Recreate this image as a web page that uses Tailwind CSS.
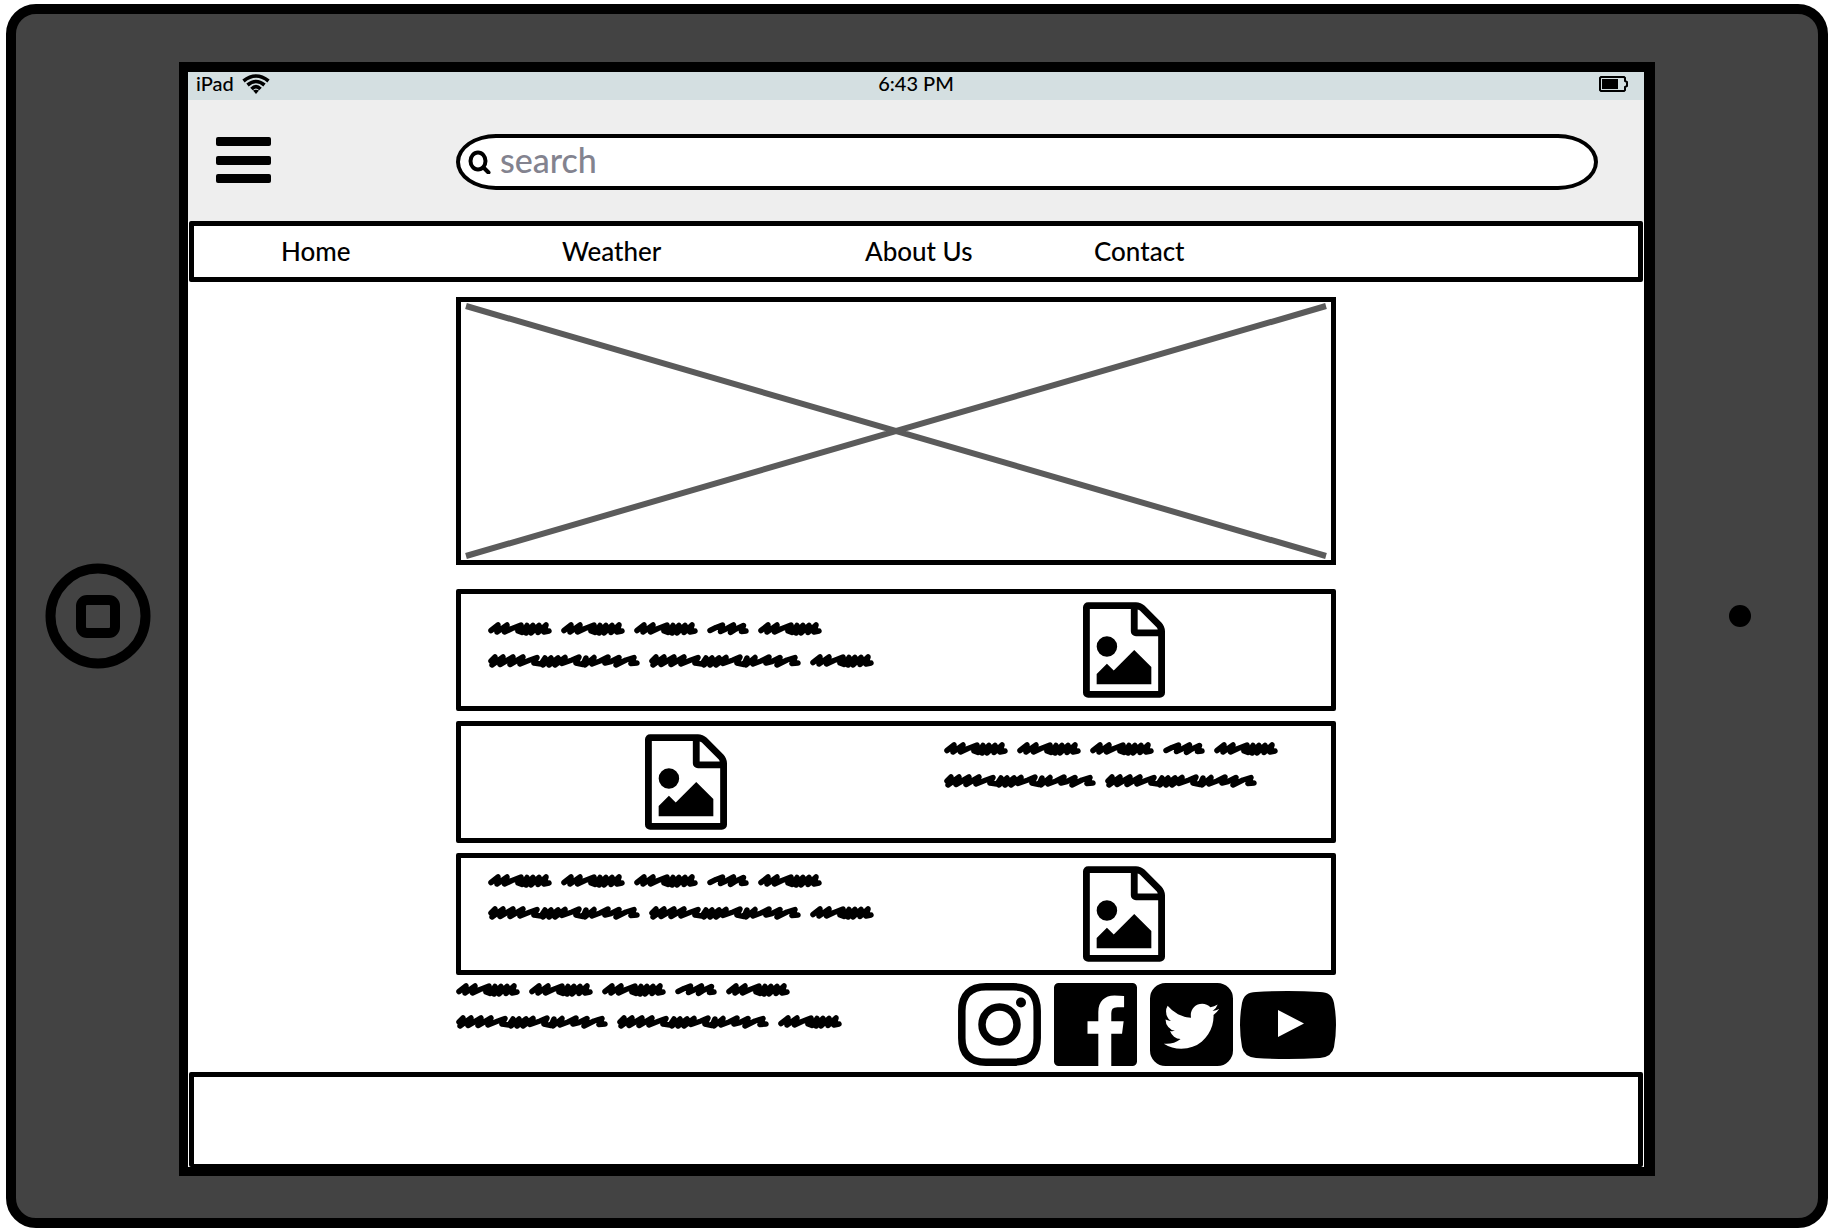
<!DOCTYPE html>
<html lang="en">
<head>
<meta charset="utf-8">
<meta name="viewport" content="width=device-width, initial-scale=1">
<title>Tablet wireframe</title>
<script src="https://cdn.jsdelivr.net/npm/@tailwindcss/browser@4"></script>
</head>
<body class="flex min-h-screen bg-white pt-1 pr-1 pb-1 pl-[6px] font-['Lato',sans-serif] font-medium text-black">

<!-- Shared shapes -->
<svg class="hidden" aria-hidden="true">
  <symbol id="file-image" viewBox="0 0 1536 1792"><path d="M1468 380q28 28 48 76t20 88v1152q0 40-28 68t-68 28h-1344q-40 0-68-28t-28-68v-1600q0-40 28-68t68-28h896q40 0 88 20t76 48zm-444-244v376h376q-10-29-22-41l-313-313q-12-12-41-22zm384 1528v-1024h-416q-40 0-68-28t-28-68v-416h-768v1536h1280zm-128-448v320h-1024v-192l192-192 128 128 384-384zm-832-192q-80 0-136-56t-56-136 56-136 136-56 136 56 56 136-56 136-136 56z"/></symbol>
  <symbol id="word-m" viewBox="0 0 64 14"><path fill="none" stroke="#000" stroke-width="5.500" stroke-linecap="round" stroke-linejoin="round" d="M3 8.500L10 3L9 10L19 3L16.500 10L24 6.500L33 3L30 9L34 10.500L39 3.500L38 11L45 3.500L43 11L51 3.500L50 10.500L58 3L56 10L61 9"/></symbol>
  <symbol id="word-s" viewBox="0 0 42 14"><path fill="none" stroke="#000" stroke-width="5.500" stroke-linecap="round" stroke-linejoin="round" d="M3 8.500L9 5.500L15.500 3L13.500 9.500L19 7L26.500 3L23.500 10.500L29 7L36.500 3.500L34.500 9.500L39 9"/></symbol>
  <symbol id="word-l" viewBox="0 0 152 14"><path fill="none" stroke="#000" stroke-width="5.500" stroke-linecap="round" stroke-linejoin="round" d="M3 7L7 3L4 11L15 3L12 10.500L25 3L22 10.500L35 3L32 10L42 6L49 3.500L46 9L53 10L57 4L55 11L63 4L61 11L70 4L67 11L77 3.500L74 9.500L84 6L91 3L88 9L95 10.500L98 4L97 11L106 3.500L104 10L112 7L120 3L117 9L123 7.500L131 3.500L128 11L138 6L146 3.500L143 9.500L149 9"/></symbol>
</svg>

<div class="grid flex-1 grid-cols-[163px_minmax(0,1fr)_163px] rounded-[30px] border-[10px] border-black bg-[#434343] pt-12 pb-[42px]">
  <div class="flex items-center justify-center">
    <button type="button" aria-label="Home button" class="mb-[6px] size-[106px]">
      <svg viewBox="0 0 106 106" fill="none" stroke="#000" stroke-width="10"><circle cx="53" cy="53" r="47.500"/><rect x="36" y="37" width="34" height="33" rx="6"/></svg>
    </button>
  </div>

  <div class="flex flex-col border-t-[10px] border-r-[11px] border-b-[9px] border-l-[9px] border-black bg-white">
    <div class="grid h-7 grid-cols-3 bg-[#d4dfe1] px-2 text-xl leading-[22px]">
      <div class="flex gap-2">
        <span>iPad</span>
        <svg class="mt-0.5 h-5 w-7" viewBox="0 0 28 20" fill="none" stroke="#000" stroke-width="3.600"><path d="M1.500 7Q14-3 26.500 7"/><path d="M5.500 11Q14 4 22.500 11"/><path d="M9.500 15Q14 10.500 18.500 15"/><path fill="#000" stroke="none" d="M11 16.500Q14 15 17 16.500L14 20Z"/></svg>
      </div>
      <span class="text-center">6:43 PM</span>
      <svg class="mt-1 mr-2 h-4 w-[29px] justify-self-end" viewBox="0 0 29 16" fill="none" stroke="#000" stroke-width="2"><path d="M2 1H25L26 2V5L28 6V10L26 11V14L25 15H2L1 14V2Z"/><path fill="#000" stroke="none" d="M3 3H19V13H3Z"/></svg>
    </div>

    <header class="flex h-[121px] items-start bg-[#eeeeee] pt-[34px] pr-[46px] pl-7">
      <button type="button" aria-label="Menu" class="mt-[3px] flex h-[46px] w-[55px] flex-col justify-between">
        <span class="h-[9px] w-full rounded-xs bg-black"></span>
        <span class="h-[9px] w-full rounded-xs bg-black"></span>
        <span class="h-[9px] w-full rounded-xs bg-black"></span>
      </button>
      <label class="ml-[185px] flex h-14 flex-1 items-center gap-2 rounded-[40px/28px] border-4 border-black bg-white pl-2">
        <svg class="size-6 shrink-0" viewBox="0 0 24 24" fill="none" stroke="#000" stroke-width="4" stroke-linecap="round"><ellipse cx="10" cy="11" rx="7.500" ry="8.500"/><path d="M16 18L20.500 22.500"/></svg>
        <input type="search" aria-label="Search" placeholder="search" class="min-w-0 flex-1 pb-1 text-[34px] leading-9 outline-none placeholder:text-[#83838f]">
      </label>
    </header>

    <nav class="mx-px flex h-[61px] items-center rounded-xs border-[5px] border-black pb-0.5 pl-[87px] text-[26px] leading-8">
      <a href="#" class="w-[281px]">Home</a>
      <a href="#" class="w-[303px]">Weather</a>
      <a href="#" class="w-[229px]">About Us</a>
      <a href="#">Contact</a>
    </nav>

    <main class="flex flex-col pt-[15px] pr-[308px] pl-[268px]">
      <div class="h-[268px] border-[5px] border-black px-[5px] py-1">
        <svg class="h-full w-full overflow-visible" viewBox="0 0 100 100" preserveAspectRatio="none" stroke="#5b5b5b" stroke-width="6"><path vector-effect="non-scaling-stroke" d="M0 0L100 100M0 100L100 0"/></svg>
      </div>

      <section class="mt-6 grid h-[122px] grid-cols-2 rounded-xs border-[5px] border-black">
        <div class="flex flex-col gap-[18px] pt-7 pl-[27px]">
          <div class="flex gap-[9px]"><svg class="h-3.5 w-16"><use href="#word-m"/></svg><svg class="h-3.5 w-16"><use href="#word-m"/></svg><svg class="h-3.5 w-16"><use href="#word-m"/></svg><svg class="h-3.5 w-[42px]"><use href="#word-s"/></svg><svg class="h-3.5 w-16"><use href="#word-m"/></svg></div>
          <div class="flex gap-[9px]"><svg class="h-3.5 w-[152px]"><use href="#word-l"/></svg><svg class="h-3.5 w-[152px]"><use href="#word-l"/></svg><svg class="h-3.5 w-16"><use href="#word-m"/></svg></div>
        </div>
        <svg class="mt-2 ml-5 h-24 w-[82px] justify-self-center"><use href="#file-image"/></svg>
      </section>

      <section class="mt-2.5 grid h-[122px] grid-cols-2 rounded-xs border-[5px] border-black">
        <svg class="mt-2 ml-[14px] h-24 w-[82px] justify-self-center"><use href="#file-image"/></svg>
        <div class="flex flex-col gap-[18px] pt-4 pl-12">
          <div class="flex gap-[9px]"><svg class="h-3.5 w-16"><use href="#word-m"/></svg><svg class="h-3.5 w-16"><use href="#word-m"/></svg><svg class="h-3.5 w-16"><use href="#word-m"/></svg><svg class="h-3.5 w-[42px]"><use href="#word-s"/></svg><svg class="h-3.5 w-16"><use href="#word-m"/></svg></div>
          <div class="flex gap-[9px]"><svg class="h-3.5 w-[152px]"><use href="#word-l"/></svg><svg class="h-3.5 w-[152px]"><use href="#word-l"/></svg></div>
        </div>
      </section>

      <section class="mt-2.5 grid h-[122px] grid-cols-2 rounded-xs border-[5px] border-black">
        <div class="flex flex-col gap-[18px] pt-4 pl-[27px]">
          <div class="flex gap-[9px]"><svg class="h-3.5 w-16"><use href="#word-m"/></svg><svg class="h-3.5 w-16"><use href="#word-m"/></svg><svg class="h-3.5 w-16"><use href="#word-m"/></svg><svg class="h-3.5 w-[42px]"><use href="#word-s"/></svg><svg class="h-3.5 w-16"><use href="#word-m"/></svg></div>
          <div class="flex gap-[9px]"><svg class="h-3.5 w-[152px]"><use href="#word-l"/></svg><svg class="h-3.5 w-[152px]"><use href="#word-l"/></svg><svg class="h-3.5 w-16"><use href="#word-m"/></svg></div>
        </div>
        <svg class="mt-2 ml-5 h-24 w-[82px] justify-self-center"><use href="#file-image"/></svg>
      </section>

      <div class="flex justify-between pt-2">
        <div class="flex flex-col gap-[18px]">
          <div class="flex gap-[9px]"><svg class="h-3.5 w-16"><use href="#word-m"/></svg><svg class="h-3.5 w-16"><use href="#word-m"/></svg><svg class="h-3.5 w-16"><use href="#word-m"/></svg><svg class="h-3.5 w-[42px]"><use href="#word-s"/></svg><svg class="h-3.5 w-16"><use href="#word-m"/></svg></div>
          <div class="flex gap-[9px]"><svg class="h-3.5 w-[152px]"><use href="#word-l"/></svg><svg class="h-3.5 w-[152px]"><use href="#word-l"/></svg><svg class="h-3.5 w-16"><use href="#word-m"/></svg></div>
        </div>
        <div class="flex items-center">
          <a href="#" aria-label="Instagram" class="mr-[13px]"><svg class="size-[83px]" viewBox="0 0 83 83" fill="none" stroke="#000" stroke-width="7.500"><path d="M28 3.800H55C72 3.800 79.200 12 79.200 28V55C79.200 71 72 79.200 55 79.200H28C12 79.200 3.800 71 3.800 55V28C3.800 12 12 3.800 28 3.800Z"/><circle cx="41.500" cy="41.500" r="17.500"/><circle cx="63" cy="19.500" r="5" fill="#000" stroke="none"/></svg></a>
          <a href="#" aria-label="Facebook" class="mr-[13px]"><svg class="size-[83px]" viewBox="128 128 1536 1536"><path d="M1579 128q35 0 60 25t25 60v1366q0 35-25 60t-60 25h-391v-595h199l30-232h-229v-148q0-56 23.500-84t91.500-28l122-1v-207q-63-9-178-9-136 0-217.500 80t-81.500 226v171h-200v232h200v595h-735q-35 0-60-25t-25-60v-1366q0-35 25-60t60-25h1366z"/></svg></a>
          <a href="#" aria-label="Twitter" class="mr-[7px]"><svg class="size-[83px]" viewBox="128 128 1536 1536"><path d="M1408 610q-56 25-121 34 68-40 93-117-65 38-134 51-61-66-153-66-87 0-148.500 61.500t-61.500 148.500q0 29 5 48-129-7-242-65t-192-155q-29 50-29 106 0 114 91 175-47-1-100-26v2q0 75 50 133.500t123 72.500q-29 8-51 8-13 0-39-4 21 63 74.500 104t121.500 42q-116 90-261 90-26 0-50-3 148 94 322 94 112 0 210-35.500t168-95 120.500-137 75-162 24.500-168.500q0-18-1-27 63-45 105-109zm256-194v960q0 119-84.500 203.500t-203.500 84.500h-960q-119 0-203.500-84.500t-84.500-203.500v-960q0-119 84.500-203.500t203.500-84.500h960q119 0 203.500 84.500t84.500 203.500z"/></svg></a>
          <a href="#" aria-label="YouTube"><svg class="h-[68px] w-24" viewBox="0 0 96 68"><path fill-rule="evenodd" d="M16 1Q48-1 80 1Q92 1 94 12Q98 34 94 56Q92 66 80 67Q48 69 16 67Q4 66 2 56Q-2 34 2 12Q4 1 16 1ZM38 19V46L64 32.500Z"/></svg></a>
        </div>
      </div>
    </main>

    <footer class="mx-px mt-[6px] min-h-[92px] flex-1 rounded-xs border-[5px] border-b-[3px] border-black"></footer>
  </div>

  <div class="flex items-center justify-center">
    <span class="mb-[6px] ml-[7px] size-[22px] rounded-full bg-black"></span>
  </div>
</div>
</body>
</html>
